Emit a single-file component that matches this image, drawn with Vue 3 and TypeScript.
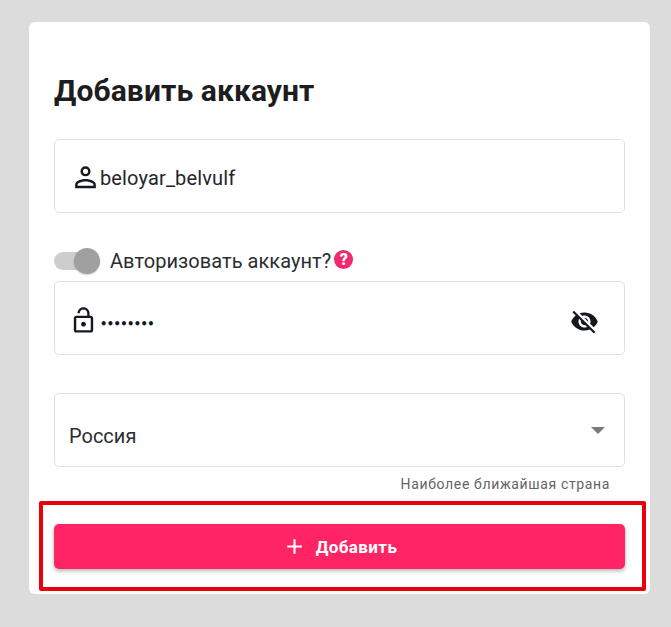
<script setup lang="ts">
const username = 'beloyar_belvulf'
const dots = '••••••••'
</script>

<template>
  <div class="page">
    <div class="card">
      <h1 class="title">Добавить аккаунт</h1>

      <div class="field field-login">
        <svg class="icon" viewBox="0 0 24 24" width="31" height="31">
          <path fill="#14181f" d="M12 6a2 2 0 1 1 0 4 2 2 0 0 1 0-4m0 9.9c2.97 0 6.1 1.46 6.1 2.1v1.1H5.9V18c0-.64 3.13-2.1 6.1-2.1M12 4.1a3.9 3.9 0 1 0 0 7.8 3.9 3.9 0 0 0 0-7.8zm0 9.9c-2.67 0-8 1.34-8 4v3h16v-3c0-2.66-5.33-4-8-4z" />
        </svg>
        <span class="value">{{ username }}</span>
      </div>

      <div class="switch-row">
        <span class="switch"><span class="track"></span><span class="thumb"></span></span>
        <span class="switch-label">Авторизовать аккаунт?</span>
        <span class="help">?</span>
      </div>

      <div class="field field-pass">
        <svg class="icon lock" viewBox="0 0 24 24" width="29" height="29">
          <path fill="#14181f" d="M12 17c1.1 0 2-.9 2-2s-.9-2-2-2-2 .9-2 2 .9 2 2 2zm6-9h-1V6c0-2.76-2.24-5-5-5S7 3.24 7 6h1.9c0-1.71 1.39-3.1 3.1-3.1 1.71 0 3.1 1.39 3.1 3.1v2H6c-1.1 0-2 .9-2 2v10c0 1.1.9 2 2 2h12c1.1 0 2-.9 2-2V10c0-1.1-.9-2-2-2zm0 12H6V10h12v10z" />
        </svg>
        <span class="dots">{{ dots }}</span>
        <svg class="eye" viewBox="0 0 24 24" width="29" height="29">
          <path fill="#14181f" d="M12 7c2.76 0 5 2.24 5 5 0 .65-.13 1.26-.36 1.83l2.92 2.92c1.51-1.26 2.7-2.89 3.43-4.75-1.73-4.39-6-7.5-11-7.5-1.4 0-2.74.25-3.98.7l2.16 2.16C10.74 7.13 11.35 7 12 7zM2 4.27l2.28 2.28.46.46C3.08 8.3 1.78 10.02 1 12c1.73 4.39 6 7.5 11 7.5 1.55 0 3.03-.3 4.38-.84l.42.42L19.73 22 21 20.73 3.27 3 2 4.27zM7.53 9.8l1.55 1.55c-.05.21-.08.43-.08.65 0 1.66 1.34 3 3 3 .22 0 .44-.03.65-.08l1.55 1.55c-.67.33-1.41.53-2.2.53-2.76 0-5-2.24-5-5 0-.79.2-1.53.53-2.2zm4.31-.78l3.15 3.15.02-.16c0-1.66-1.34-3-3-3l-.17.01z" />
        </svg>
      </div>

      <div class="field field-country">
        <span class="country">Россия</span>
        <span class="caret"></span>
      </div>
      <div class="hint">Наиболее ближайшая страна</div>

      <button class="add" type="button">
        <svg viewBox="0 0 24 24" width="25" height="25">
          <path fill="#fff" d="M19 13h-6v6h-2v-6H5v-2h6V5h2v6h6v2z" />
        </svg>
        <span>Добавить</span>
      </button>

      <div class="highlight"></div>
    </div>
  </div>
</template>

<style>
html,
body {
  margin: 0;
  background: #dcdcdc;
}
</style>

<style scoped>
.page {
  width: 671px;
  height: 627px;
  box-sizing: border-box;
  padding: 22px 21px 33px 29px;
  background: #dcdcdc;
  font-family: Roboto, "Liberation Sans", sans-serif;
  color: #1c1f24;
  overflow: hidden;
}
.card {
  position: relative;
  height: 572px;
  box-sizing: border-box;
  padding: 0 25px;
  background: #fff;
  border-radius: 6px;
  display: flex;
  flex-direction: column;
}
.title {
  margin: 51px 0 0;
  font-size: 30px;
  line-height: 36px;
  font-weight: 700;
  color: #1d1d1d;
  letter-spacing: 0.1px;
}
.field {
  height: 74px;
  box-sizing: border-box;
  border: 1px solid #e0e0e0;
  border-radius: 5px;
  display: flex;
  align-items: center;
  flex: none;
}
.field-login {
  margin-top: 30px;
  padding-left: 15px;
}
.icon {
  flex: none;
}
.value {
  margin-left: -1px;
  font-size: 20px;
  letter-spacing: 0.14px;
  color: #22262c;
  margin-top: 4px;
}
.switch-row {
  margin-top: 30px;
  height: 36px;
  display: flex;
  align-items: center;
}
.switch {
  position: relative;
  width: 46px;
  height: 26px;
  flex: none;
}
.track {
  position: absolute;
  left: 0;
  top: 4px;
  width: 40px;
  height: 18px;
  border-radius: 9px;
  background: #cdcdcd;
}
.thumb {
  position: absolute;
  right: 0;
  top: 0;
  width: 26px;
  height: 26px;
  border-radius: 50%;
  background: #a0a0a0;
  box-shadow: 0 1px 2px rgba(0, 0, 0, 0.2);
}
.switch-label {
  margin-left: 10px;
  font-size: 20px;
  letter-spacing: 0.05px;
  color: #2a2d31;
}
.help {
  width: 19px;
  height: 19px;
  margin-left: 3px;
  margin-top: -4px;
  border-radius: 50%;
  background: #f0296e;
  color: #fff;
  font-size: 16px;
  font-weight: 900;
  line-height: 19px;
  text-align: center;
}
.field-pass {
  padding: 0 25px 0 14px;
  margin-top: 2px;
}
.lock {
  margin-top: 5px;
}
.dots {
  margin-left: 2px;
  font-size: 11.5px;
  font-weight: 700;
  color: #14181f;
  letter-spacing: -0.6px;
  font-family: "DejaVu Sans", sans-serif;
  flex: 1;
  margin-top: 11px;
}
.eye {
  margin-top: 6px;
  flex: none;
}
.field-country {
  margin-top: 38px;
  padding: 0 19px 0 14px;
  justify-content: space-between;
}
.country {
  font-size: 20px;
  color: #2a2d31;
  margin-top: 12px;
}
.caret {
  width: 0;
  height: 0;
  border-left: 7.5px solid transparent;
  border-right: 7.5px solid transparent;
  border-top: 7.5px solid #7a7a7a;
  margin-top: 0;
}
.hint {
  margin-top: 9px;
  padding-right: 15px;
  text-align: right;
  font-size: 14px;
  line-height: 17px;
  letter-spacing: 0.64px;
  color: #5f6468;
}
.add {
  margin-top: 31px;
  height: 45px;
  width: 100%;
  border: none;
  border-radius: 5px;
  background: #ff2464;
  color: #fff;
  font-family: inherit;
  font-size: 17px;
  font-weight: 700;
  letter-spacing: 0.4px;
  display: flex;
  align-items: center;
  justify-content: center;
  gap: 9px;
  padding: 0;
  box-shadow: 0 2px 4px rgba(0, 0, 0, 0.3);
  flex: none;
}
.highlight {
  position: absolute;
  left: 10px;
  top: 479px;
  width: 607px;
  height: 90px;
  box-sizing: border-box;
  border: 4px solid #e8000b;
  border-radius: 2px;
  pointer-events: none;
}
</style>
